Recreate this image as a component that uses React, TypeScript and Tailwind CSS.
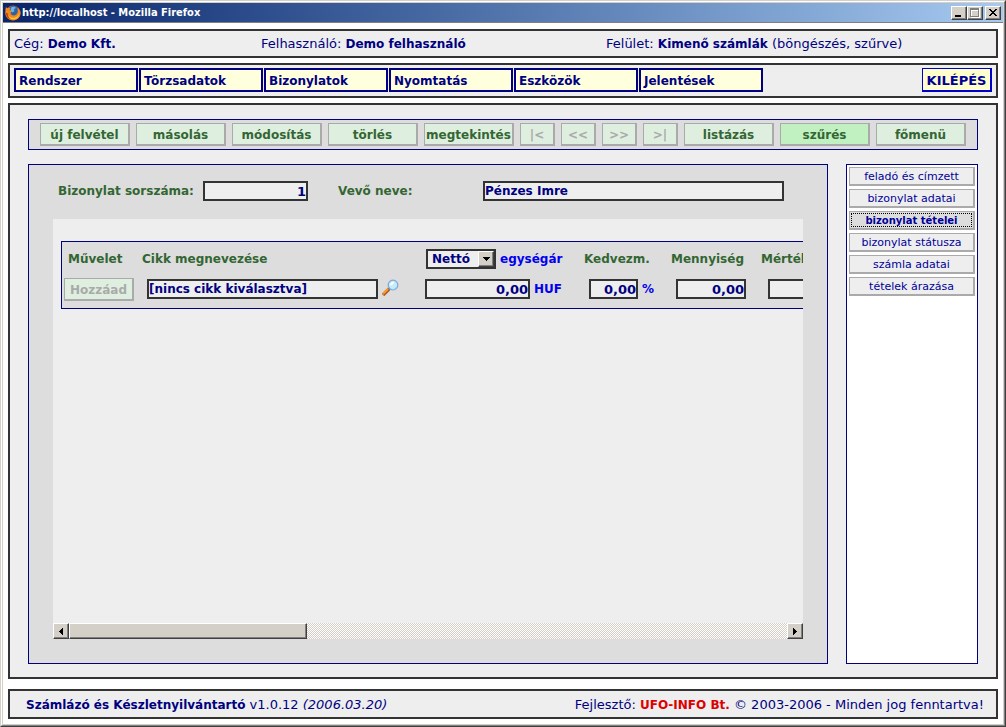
import React, { useState } from "react";
import clsx from "clsx";

const MENU = ["Rendszer", "Törzsadatok", "Bizonylatok", "Nyomtatás", "Eszközök", "Jelentések"];

const TOOLS = [
  { label: "új felvétel" },
  { label: "másolás" },
  { label: "módosítás" },
  { label: "törlés" },
  { label: "megtekintés" },
  { label: "|<", nav: true },
  { label: "<<", nav: true },
  { label: ">>", nav: true },
  { label: ">|", nav: true },
  { label: "listázás" },
  { label: "szűrés", active: true },
  { label: "főmenü" },
];

const TABS = [
  "feladó és címzett",
  "bizonylat adatai",
  "bizonylat tételei",
  "bizonylat státusza",
  "számla adatai",
  "tételek árazása",
];

const FIELD = "h-5 border-2 border-[#333333] bg-[#eeeeee] font-bold text-[#000080] outline-none";
const RAISED = "border border-t-white border-l-white border-r-[#404040] border-b-[#404040] bg-[#d4d0c8] shadow-[inset_-1px_-1px_0_#808080]";

export default function App() {
  const [tab, setTab] = useState("bizonylat tételei");

  return (
    <div className="flex min-h-screen flex-col border border-t-[#d4d0c8] border-l-[#d4d0c8] border-r-[#404040] border-b-[#404040] bg-white font-['DejaVu_Sans',Verdana,sans-serif] text-[13px] leading-4 text-[#000080]">
      <div className="flex flex-1 flex-col border border-t-white border-l-white border-r-[#808080] border-b-[#808080]">
        <div className="flex flex-1 flex-col border border-[#d4d0c8]">
          <TitleBar />

          <div className="flex flex-1 flex-col px-[5px] pt-1.5 pb-[5px]">
            <header className="grid grid-cols-[247fr_345fr_386fr] border-2 border-[#333333] bg-[#eeeeee] px-1 pt-[5px] pb-1">
              <p>Cég: <b className="text-xs">Demo Kft.</b></p>
              <p>Felhasználó: <b className="text-xs">Demo felhasználó</b></p>
              <p>Felület: <b className="text-xs">Kimenő számlák</b> (böngészés, szűrve)</p>
            </header>

            <nav className="mt-[5px] flex items-center gap-px border-2 border-[#333333] bg-[#eeeeee] px-1 pt-[3px] pb-1">
              {MENU.map((m) => (
                <button key={m} className="h-6 w-[124px] border-2 border-[#000080] bg-[#ffffdd] pt-0.5 pl-[3px] text-left text-xs font-bold">
                  {m}
                </button>
              ))}
              <button className="ml-auto h-6 w-[70px] border border-r-2 border-b-2 border-[#0000cc] bg-[#ffffcc] pt-0.5 text-center font-bold text-[#000099]">
                KILÉPÉS
              </button>
            </nav>

            <main className="mt-[5px] flex flex-1 flex-col gap-3.5 border-2 border-[#333333] bg-[#eeeeee] px-[18px] pt-3.5 pb-[13px]">
              <div className="flex justify-center gap-1.5 border border-[#000080] bg-[#dddddd] py-[3px]">
                {TOOLS.map((t) => (
                  <button
                    key={t.label}
                    disabled={t.nav}
                    className={clsx(
                      "h-[23px] border border-r-2 border-b-2 border-[#aaaaaa] pt-0.5 text-center text-xs font-bold whitespace-nowrap",
                      t.nav ? "w-[35px] text-[#aaaaaa]" : "w-[90px] text-[#336633]",
                      t.active ? "bg-[#c1f0c1]" : "bg-[#dfefdf]"
                    )}
                  >
                    {t.label}
                  </button>
                ))}
              </div>

              <div className="flex flex-1 gap-[18px]">
                <section className="flex min-w-0 flex-1 flex-col border border-[#000080] bg-[#dddddd] px-6 pt-4 pb-6">
                  <div className="flex items-center pl-[5px] text-xs font-bold text-[#336633]">
                    <label htmlFor="sorszam" className="w-[145px] whitespace-nowrap">Bizonylat sorszáma:</label>
                    <input id="sorszam" defaultValue="1" className={clsx(FIELD, "w-[105px] text-right text-[13px]")} />
                    <label htmlFor="vevo" className="ml-[30px] w-[145px]">Vevő neve:</label>
                    <input id="vevo" defaultValue="Pénzes Imre" className={clsx(FIELD, "w-[301px]")} />
                  </div>

                  <div className="mt-[18px] flex flex-1 flex-col bg-[#eeeeee]">
                    <div className="flex-1 overflow-hidden pt-[22px] pl-2">
                      <ItemTable />
                    </div>
                    <ScrollBar />
                  </div>
                </section>

                <aside className="flex w-[132px] flex-col gap-[3px] border border-[#000080] bg-white p-0.5">
                  {TABS.map((t) => (
                    <button
                      key={t}
                      onClick={() => setTab(t)}
                      className={clsx(
                        "h-[19px] border border-r-2 border-b-2 border-[#aaaaaa] leading-3 whitespace-nowrap text-[#000099]",
                        t === tab ? "bg-[#dddddd] p-px text-[10px] font-bold" : "bg-[#eeeeee] pt-0.5 text-[11px]"
                      )}
                    >
                      {t === tab ? <span className="flex h-full items-center justify-center border border-dotted border-black pt-0.5">{t}</span> : t}
                    </button>
                  ))}
                </aside>
              </div>
            </main>

            <footer className="mt-2.5 flex justify-between border-2 border-[#333333] bg-[#eeeeee] pt-1.5 pr-3 pb-1 pl-4">
              <p><b className="text-xs">Számlázó és Készletnyilvántartó</b> v1.0.12 <i>(2006.03.20)</i></p>
              <p>Fejlesztő: <b className="text-xs text-[#dd0000]">UFO-INFO Bt.</b> © 2003-2006 - Minden jog fenntartva!</p>
            </footer>
          </div>
        </div>
      </div>
    </div>
  );
}

function TitleBar() {
  return (
    <div className="flex h-5 items-center border-b border-[#808080] bg-linear-to-r from-[#0a246a] to-[#a6caf0] pr-0.5 pl-0.5">
      <FirefoxIcon />
      <h1 className="ml-px font-['DejaVu_Sans_Condensed','DejaVu_Sans',sans-serif] text-[11px] font-bold text-white">
        http://localhost - Mozilla Firefox
      </h1>
      <div className="ml-auto flex">
        <button aria-label="Kis méret" className={clsx(RAISED, "h-3.5 w-4")}>
          <svg viewBox="0 0 14 12" className="h-3 w-3.5" shapeRendering="crispEdges"><path d="M3 8h6v2H3z" fill="#000" /></svg>
        </button>
        <button aria-label="Teljes méret" className={clsx(RAISED, "h-3.5 w-4")}>
          <svg viewBox="0 0 14 12" className="h-3 w-3.5" shapeRendering="crispEdges">
            <path d="M3 1h9v10H3zM4 4v6h7V4z" fill="#fff" fillRule="evenodd" />
            <path d="M2 1h9v9H2zM3 3v6h7V3z" fill="#808080" fillRule="evenodd" />
          </svg>
        </button>
        <button aria-label="Bezárás" className={clsx(RAISED, "ml-0.5 h-3.5 w-4")}>
          <svg viewBox="0 0 14 12" className="h-3 w-3.5" shapeRendering="crispEdges">
            <path d="M3 2h2v1h1v1h2V3h1V2h2v1h-1v1H9v1H8v1h1v1h1v1h1v1H9V8H8V7H6v1H5v1H3V8h1V7h1V6h1V5H5V4H4V3H3z" fill="#000" />
          </svg>
        </button>
      </div>
    </div>
  );
}

function ItemTable() {
  return (
    <div className="w-[1000px] border border-[#000080] bg-[#dddddd] pt-0.5 pb-1">
      <table className="w-full table-fixed border-collapse text-xs">
        <colgroup>
          <col className="w-[75px]" />
          <col className="w-[286px]" />
          <col className="w-[159px]" />
          <col className="w-[87px]" />
          <col className="w-[92px]" />
          <col />
        </colgroup>
        <thead>
          <tr className="h-[30px] text-left text-[#336633]">
            <th className="pl-1.5">Művelet</th>
            <th className="pl-[5px]">Cikk megnevezése</th>
            <th className="pl-[3px]">
              <div className="flex items-center gap-1">
                <div className="relative flex">
                  <select aria-label="Ár típusa" className={clsx(FIELD, "w-[70px] appearance-none pl-1 leading-4")}>
                    <option>Nettó</option>
                    <option>Bruttó</option>
                  </select>
                  <span className={clsx(RAISED, "pointer-events-none absolute top-0.5 right-0.5 flex h-4 w-4 items-center justify-center")}>
                    <svg viewBox="0 0 7 4" className="h-1 w-[7px]" shapeRendering="crispEdges"><path d="M0 0h7v1H6v1H5v1H4v1H3V3H2V2H1V1H0z" fill="#000" /></svg>
                  </span>
                </div>
                <span className="text-[#0000ee]">egységár</span>
              </div>
            </th>
            <th className="pl-0.5">Kedvezm.</th>
            <th className="pl-0.5">Mennyiség</th>
            <th>Mértékegység</th>
          </tr>
        </thead>
        <tbody>
          <tr className="h-[30px] font-bold text-[#0000ee]">
            <td className="pl-0.5">
              <button disabled className="block h-[23px] w-[70px] border border-r-2 border-b-2 border-[#aaaaaa] bg-[#dfefdf] pt-0.5 text-center text-[#aaaaaa]">
                Hozzáad
              </button>
            </td>
            <td className="pl-2.5">
              <div className="flex items-center gap-1">
                <input aria-label="Cikk megnevezése" defaultValue="[nincs cikk kiválasztva]" className={clsx(FIELD, "w-[231px]")} />
                <button aria-label="Keresés"><SearchIcon /></button>
              </div>
            </td>
            <td className="pl-0.5">
              <div className="flex items-center gap-1">
                <input aria-label="Egységár" defaultValue="0,00" className={clsx(FIELD, "w-[105px] text-right text-[13px]")} />
                HUF
              </div>
            </td>
            <td className="pl-[7px]">
              <div className="flex items-center gap-1">
                <input aria-label="Kedvezmény" defaultValue="0,00" className={clsx(FIELD, "w-[49px] text-right text-[13px]")} />
                %
              </div>
            </td>
            <td className="pl-[7px]">
              <input aria-label="Mennyiség" defaultValue="0,00" className={clsx(FIELD, "block w-[70px] text-right text-[13px]")} />
            </td>
            <td className="pl-[7px]">
              <input aria-label="Mértékegység" className={clsx(FIELD, "block w-[105px]")} />
            </td>
          </tr>
        </tbody>
      </table>
    </div>
  );
}

function ScrollBar() {
  return (
    <div className="flex h-4 bg-[repeating-conic-gradient(#d4d0c8_0_25%,#ffffff_0_50%)] bg-[length:2px_2px]">
      <button aria-label="Balra" className={clsx(RAISED, "flex w-4 items-center justify-center")}>
        <svg viewBox="0 0 4 7" className="h-[7px] w-1" shapeRendering="crispEdges"><path d="M4 0v7H3V6H2V5H1V4H0V3h1V2h1V1h1V0z" fill="#000" /></svg>
      </button>
      <div className={clsx(RAISED, "w-[238px]")} />
      <button aria-label="Jobbra" className={clsx(RAISED, "ml-auto flex w-4 items-center justify-center")}>
        <svg viewBox="0 0 4 7" className="h-[7px] w-1" shapeRendering="crispEdges"><path d="M0 0v7h1V6h1V5h1V4h1V3H3V2H2V1H1V0z" fill="#000" /></svg>
      </button>
    </div>
  );
}

function SearchIcon() {
  return (
    <svg viewBox="0 0 17 17" className="mb-1 block h-[17px] w-[17px]">
      <path d="M1 16l6-6" stroke="#b4531a" strokeWidth="3.4" />
      <path d="M1 15l6-6" stroke="#ff9c2e" strokeWidth="1.8" />
      <path d="M6.500 10.500l1.500-1.500" stroke="#6a6f9a" strokeWidth="2" />
      <circle cx="11" cy="6" r="4.800" fill="#c4ecfb" stroke="#7fa3d4" strokeWidth="1.200" />
      <path d="M8 6.500a3.500 3.500 0 0 1 4-3.500c-.5 2-1.800 3.400-4 3.500z" fill="#fff" />
      <path d="M14.500 8a4 4 0 0 1-4 2.500" stroke="#8fd0f2" fill="none" />
    </svg>
  );
}

function FirefoxIcon() {
  return (
    <svg viewBox="0 0 16 16" className="h-4 w-4">
      <circle cx="8" cy="8" r="7.600" fill="#d9541a" />
      <circle cx="8.500" cy="6.500" r="5.800" fill="#2d62a8" />
      <path d="M6 2.500c2-1.300 4-.8 5 .5l-2 1 .5 2-2 1.500-2-1.500z" fill="#6fb2e0" />
      <path d="M1 1.500c.3 1 .8 1.500 1.500 1.800 1-.5 2-.5 2.800-.2L4.500 5l2.500 1.300L5.500 8c.5 2 2.500 3 4.500 2.200 2-.8 3-2.500 2.800-5.200l-.5-2.500c2.300 1.300 3.500 3.700 3.200 6.200-.5 4-3.800 6.700-7.700 6.600C3.500 15.200.4 12 .4 8c0-2.500.1-4.500.6-6.500z" fill="#f08a1d" />
      <path d="M13.500 4c1.500 3.500.5 7-3 8.600-2.500 1-5.500.2-7-2 .8 3 3.500 4 6 3.500 4-.8 6-5 4-10.100z" fill="#ffd23c" />
      <path d="M1 8c0 3 2 6 5 6.800-2-1.500-3.500-3.800-3.300-6.500z" fill="#c23a12" />
    </svg>
  );
}
